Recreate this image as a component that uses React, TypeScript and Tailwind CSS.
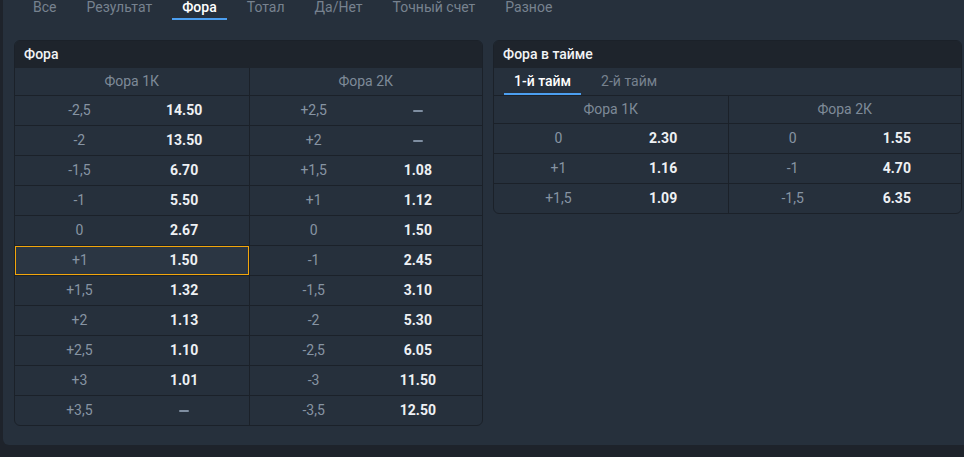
const tabs = ["Все", "Результат", "Фора", "Тотал", "Да/Нет", "Точный счет", "Разное"];

type Row = [string, string, string, string];

const mainRows: Row[] = [
  ["-2,5", "14.50", "+2,5", "-"],
  ["-2", "13.50", "+2", "-"],
  ["-1,5", "6.70", "+1,5", "1.08"],
  ["-1", "5.50", "+1", "1.12"],
  ["0", "2.67", "0", "1.50"],
  ["+1", "1.50", "-1", "2.45"],
  ["+1,5", "1.32", "-1,5", "3.10"],
  ["+2", "1.13", "-2", "5.30"],
  ["+2,5", "1.10", "-2,5", "6.05"],
  ["+3", "1.01", "-3", "11.50"],
  ["+3,5", "-", "-3,5", "12.50"],
];

const halfRows: Row[] = [
  ["0", "2.30", "0", "1.55"],
  ["+1", "1.16", "-1", "4.70"],
  ["+1,5", "1.09", "-1,5", "6.35"],
];

const Odd = ({ value }: { value: string }) =>
  value === "-" ? (
    <span className="inline-block w-[10px] h-[2px] rounded-full bg-[#7f8ea1]" />
  ) : (
    <span className="font-bold text-[#eef1f4]">{value}</span>
  );

const Cell = ({ line, odd, active, divider }: { line: string; odd: string; active?: boolean; divider?: boolean }) => (
  <div
    className={
      active
        ? "flex items-center px-3 h-full border border-[#f2a60c] bg-[#2b3643]"
        : divider
        ? "flex items-center px-3 h-full border-l border-[#1b2129]"
        : "flex items-center px-3 h-full"
    }
  >
    <div className="flex-1 text-center text-[#8794a3]">{line}</div>
    <div className="flex-1 flex justify-center items-center">
      <Odd value={odd} />
    </div>
  </div>
);

const Table = ({ rows, highlight }: { rows: Row[]; highlight?: number }) => (
  <div className="text-[14px]">
    <div className="grid grid-cols-2 h-[27px] leading-[26px] text-center text-[#7e8a98]">
      <div>Фора 1К</div>
      <div className="border-l border-[#1b2129]">Фора 2К</div>
    </div>
    {rows.map((r, i) => (
      <div key={i} className="grid grid-cols-2 h-[30px] border-t border-[#1b2129]">
        <Cell line={r[0]} odd={r[1]} active={i === highlight} />
        <Cell line={r[2]} odd={r[3]} divider />
      </div>
    ))}
  </div>
);

const CardHead = ({ title }: { title: string }) => (
  <div className="h-[27px] leading-[27px] px-[9px] bg-[#1e242c] text-[14px] font-medium text-[#f1f3f5]">{title}</div>
);

export default function App() {
  return (
    <div className="w-[964px] h-[457px] overflow-hidden bg-[#1e232b] font-['Roboto',sans-serif]">
      <div className="flex flex-col ml-[3px] h-[445px] rounded-bl-[6px] bg-[#26303c] pl-[11px] pr-[2px]">
        <div className="flex gap-[10px] ml-[9px] -mt-[3px] h-[23px] text-[14px]">
          {tabs.map((t) => (
            <div
              key={t}
              className={
                t === "Фора"
                  ? "px-[10px] leading-[20px] h-[23px] border-b-2 border-[#4c9ff0] font-medium text-white"
                  : "px-[10px] leading-[20px] h-[23px] text-[#77828f]"
              }
            >
              {t}
            </div>
          ))}
        </div>

        <div className="grid grid-cols-2 gap-[10px] items-start mt-[20px]">
          <div className="rounded-[6px] border border-[#1b2129] overflow-hidden">
            <CardHead title="Фора" />
            <Table rows={mainRows} highlight={5} />
          </div>

          <div className="rounded-[6px] border border-[#1b2129] overflow-hidden">
            <CardHead title="Фора в тайме" />
            <div className="flex h-[28px] pl-[10px] gap-[4px] text-[14px] border-b border-[#1b2129]">
              <div className="px-[10px] leading-[26px] border-b-2 border-[#4c9ff0] font-medium text-white">1-й тайм</div>
              <div className="px-[16px] leading-[26px] text-[#77828f]">2-й тайм</div>
            </div>
            <Table rows={halfRows} />
          </div>
        </div>
      </div>
    </div>
  );
}
